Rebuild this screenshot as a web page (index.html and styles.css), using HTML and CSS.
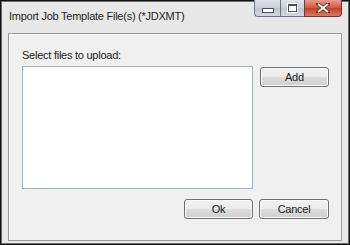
FILE: index.html
```html
<!DOCTYPE html>
<html>
<head>
<meta charset="utf-8">
<link rel="stylesheet" href="styles.css">
</head>
<body>
<div class="window">
  <div class="titlebar">
    <div class="title">Import Job Template File(s) (*JDXMT)</div>
    <div class="caption">
      <div class="cbtn min"><span class="glyph-min"></span></div>
      <div class="cbtn max"><span class="glyph-max"></span></div>
      <div class="cbtn close">
        <svg width="14" height="10" viewBox="0 0 14 10"><path d="M2 1 L12 9 M12 1 L2 9" stroke="#5a2a20" stroke-width="3.4" stroke-linecap="square"/><path d="M2 1 L12 9 M12 1 L2 9" stroke="#fff" stroke-width="2"/></svg>
      </div>
    </div>
  </div>
  <div class="panel">
    <div class="label">Select files to upload:</div>
    <div class="row">
      <div class="listbox"></div>
      <button class="btn add">Add</button>
    </div>
    <div class="actions">
      <button class="btn">Ok</button>
      <button class="btn">Cancel</button>
    </div>
  </div>
</div>
</body>
</html>
```

FILE: styles.css
```css
html, body { margin: 0; padding: 0; background: #000; }
body { font-family: "Liberation Sans", Arial, sans-serif; font-size: 11px; letter-spacing: -0.25px; color: #000; }
.window {
  width: 350px; height: 245px; box-sizing: border-box;
  border: 1px solid #111;
  box-shadow: inset 0 0 0 1px #6b6b6b;
  background: #e8e8e8;
  display: flex; flex-direction: column;
}
.titlebar { height: 31px; display: flex; justify-content: space-between; align-items: flex-start; }
.title { padding: 9px 0 0 8px; font-size: 11px; color: #1e1e1e; }
.caption { display: flex; margin-right: 7px; margin-top: -1px; }
.cbtn {
  height: 17px; box-sizing: border-box; border: 1px solid #6d7585; border-top: none;
  background: linear-gradient(#dfe3ea, #c9ced8 50%, #bfc5d0 51%, #d3d8e0);
  display: flex; align-items: center; justify-content: center;
}
.min { width: 26px; border-radius: 0 0 0 4px; border-right: none; }
.max { width: 24px; border-right: none; }
.close { width: 38px; border-radius: 0 0 4px 0; border-color: #6e3a30; background: linear-gradient(#e89a8a, #d2553f 50%, #c3402a 51%, #d77a5f); }
.glyph-min { width: 10px; height: 3px; border: 1px solid #4a5060; background: #fff; margin-top: 5px; }
.glyph-max { width: 7px; height: 5px; border: 1px solid #4a5060; border-top-width: 2px; background: #fff; box-shadow: 0 0 0 1px #fff; }
.panel {
  flex: 1; margin: 1px 7px 3px 7px;
  border: 1px solid #9a9a9a;
  box-shadow: inset 1px 1px 0 #fff;
  background: #f0f0f0;
  padding: 15px 12px 0 13px;
  display: flex; flex-direction: column;
}
.label { font-size: 11px; color: #1a1a1a; height: 17px; }
.row { display: flex; gap: 7px; align-items: flex-start; }
.listbox { width: 231px; height: 121px; background: #fff; border: 1px solid #9db3c8; border-top-color: #abadb3; }
.btn {
  font-family: inherit; font-size: 11px; letter-spacing: -0.25px; color: #1a1a1a;
  height: 20px; box-sizing: border-box; padding: 0;
  border: 1px solid #707070; border-radius: 3px;
  background: linear-gradient(#f2f2f2, #ebebeb 50%, #dddddd 51%, #cfcfcf);
  box-shadow: inset 0 0 0 1px #fbfbfb;
}
.add { width: 70px; margin-top: 1px; }
.actions { display: flex; justify-content: flex-end; gap: 6px; margin-top: 10px; }
.actions .btn { width: 69px; }
.actions .btn:last-child { width: 70px; }
```
